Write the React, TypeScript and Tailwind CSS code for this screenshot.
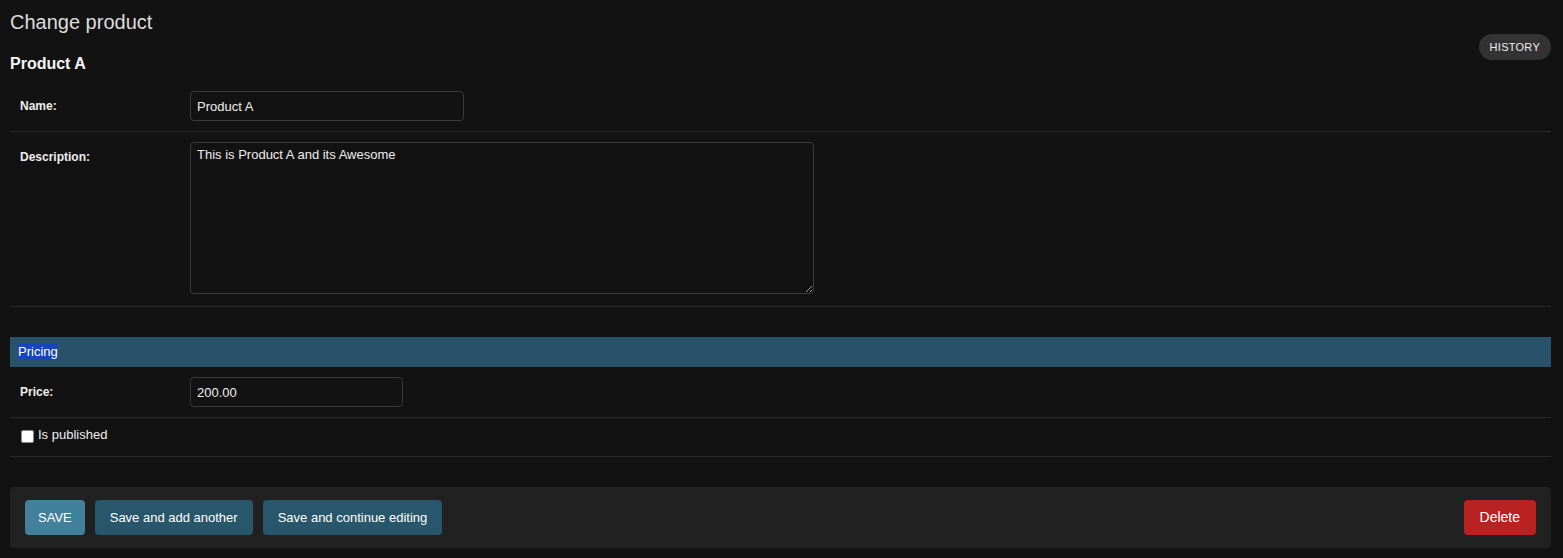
import { useState } from 'react'

const font = { fontFamily: '"Liberation Sans", Arial, sans-serif' }

function FormRow(props: { children: React.ReactNode; className?: string }) {
  return (
    <div className={`flex border-b border-[#2a2a2a] p-[10px] ${props.className ?? ''}`}>{props.children}</div>
  )
}

function Label(props: { text: string }) {
  return (
    <label className="w-[170px] shrink-0 pt-[7px] text-[12px] font-bold leading-4 text-[#eeeeee]">
      {props.text}
    </label>
  )
}

export default function App() {
  const [published, setPublished] = useState(false)

  return (
    <div style={font} className="min-h-screen bg-[#121212] pl-[10px] pr-[12px] pt-[10px] text-[#eeeeee]">
      <h1 className="text-[20px] font-light leading-6 text-[#dddddd]">Change product</h1>

      <div className="flex items-start justify-between">
        <h2 className="mt-[20px] text-[16px] font-bold leading-5 text-[#f5f5f5]">Product A</h2>
        <button
          type="button"
          className="rounded-full bg-[#333333] px-[11px] py-[6px] text-[11px] leading-[14px] tracking-wide text-[#eeeeee]"
        >
          HISTORY
        </button>
      </div>

      <div className="mt-[7px]">
        <FormRow>
          <Label text="Name:" />
          <input
            defaultValue="Product A"
            className="h-[30px] w-[274px] rounded-[4px] border border-[#3a3a3a] bg-[#121212] px-[6px] text-[13px] text-[#eeeeee] outline-none"
          />
        </FormRow>
        <FormRow className="pb-[12px]">
          <Label text="Description:" />
          <textarea
            defaultValue="This is Product A and its Awesome"
            className="h-[152px] w-[624px] rounded-[4px] border border-[#3a3a3a] bg-[#121212] px-[6px] py-[4px] text-[13px] leading-4 text-[#eeeeee] outline-none"
          />
        </FormRow>
      </div>

      <div className="mt-[30px]">
        <div className="flex h-[30px] items-center bg-[#27526a] px-2 text-[13px] text-white">
          <span className="bg-[#1646b8] leading-4">Pricing</span>
        </div>
        <FormRow>
          <Label text="Price:" />
          <input
            defaultValue="200.00"
            className="h-[30px] w-[213px] rounded-[4px] border border-[#3a3a3a] bg-[#121212] px-[6px] text-[13px] text-[#eeeeee] outline-none"
          />
        </FormRow>
        <div className="flex items-start gap-[4px] border-b border-[#2a2a2a] px-[11px] pb-[13px] pt-[9px]">
          <button
            type="button"
            onClick={() => setPublished(!published)}
            className="mt-[3px] h-[13px] w-[13px] rounded-[2px] border border-[#8a8a8a] bg-white"
          />
          <span className="text-[13px] leading-4 text-[#eeeeee]">Is published</span>
        </div>
      </div>

      <div className="mt-[30px] flex items-center justify-between rounded-[4px] bg-[#212121] px-[15px] py-[13px]">
        <div className="flex gap-[10px]">
          <button type="button" className="h-[35px] rounded-[4px] bg-[#43809b] px-[13px] text-[13px] text-white">
            SAVE
          </button>
          <button type="button" className="h-[35px] rounded-[4px] bg-[#28566a] px-[15px] text-[13px] text-white">
            Save and add another
          </button>
          <button type="button" className="h-[35px] rounded-[4px] bg-[#28566a] px-[15px] text-[13px] text-white">
            Save and continue editing
          </button>
        </div>
        <button type="button" className="h-[35px] rounded-[4px] bg-[#ba2121] px-[16px] text-[14px] text-white">
          Delete
        </button>
      </div>
    </div>
  )
}
